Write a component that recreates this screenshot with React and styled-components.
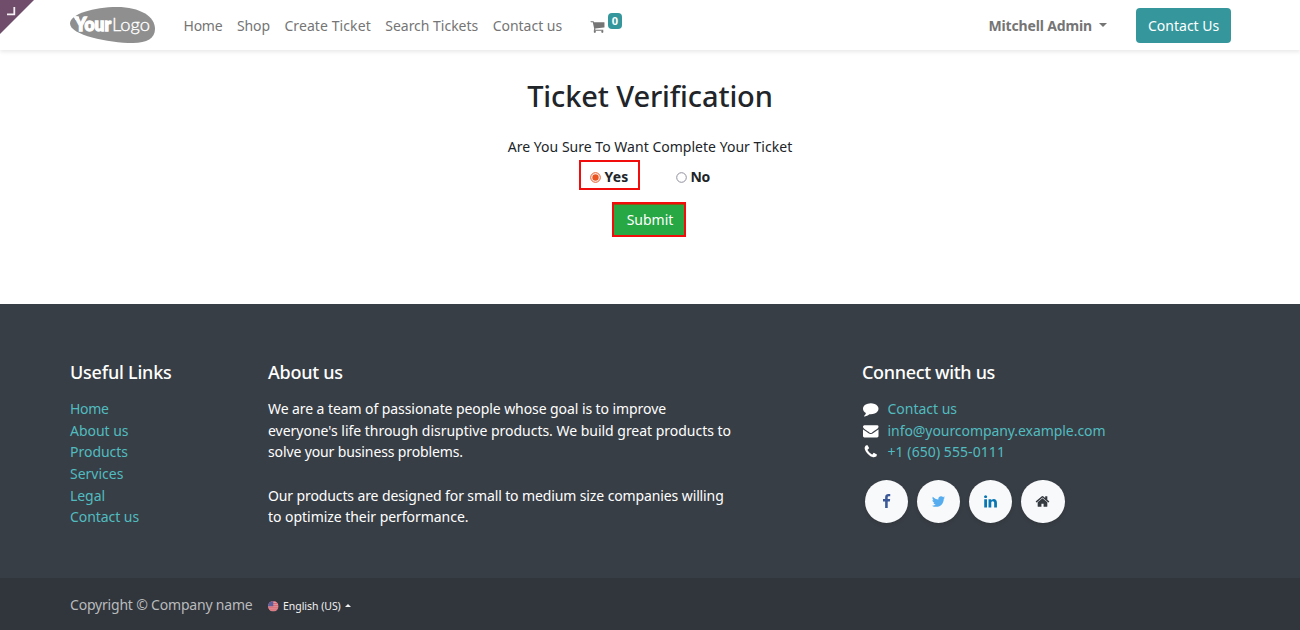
import React from "react";
import styled, { createGlobalStyle } from "styled-components";

const GlobalStyle = createGlobalStyle`
  *, *::before, *::after { box-sizing: border-box; }
  body {
    margin: 0;
    font: 400 14px/21.66px "Noto Sans", sans-serif;
    color: #212529;
    background: #fff;
  }
  a { color: inherit; text-decoration: none; }
`;

const Page = styled.div`
  position: relative;
  width: 1300px;
  height: 630px;
  display: flex;
  flex-direction: column;
  overflow: hidden;
`;

const Text = styled.span`
  display: block;
  white-space: pre;
  letter-spacing: ${(p) => p.$ls || 0}px;
  ${(p) => p.$w && `width: ${p.$w}px;`}
`;

const Corner = styled.svg`
  position: absolute;
  left: 0;
  top: 0;
  z-index: 2;
`;

const Header = styled.header`
  flex: none;
  display: flex;
  align-items: center;
  height: 50px;
  padding: 2px 69px 0 70px;
  color: #757575;
  background: #fff;
  box-shadow: 0 2px 4px rgba(0, 0, 0, 0.09);
`;

const Logo = styled.svg`
  flex: none;
  margin: -2px 28.6px 0 0;
`;

const Nav = styled.nav`
  display: flex;
  gap: 14.4px;
`;

const Cart = styled.a`
  display: flex;
  margin-left: 28px;
  gap: 2.5px;
`;

const Badge = styled.span`
  width: 14.5px;
  height: 16px;
  margin-top: -5px;
  border-radius: 4px;
  background: #35979c;
  color: #fff;
  font-size: 11px;
  font-weight: 700;
  line-height: 16px;
  text-align: center;
`;

const User = styled.a`
  display: flex;
  align-items: center;
  gap: 7px;
  margin-left: auto;
  font-weight: 700;
`;

const Caret = styled.i`
  width: 0;
  height: 0;
  border: ${(p) => p.$size}px solid transparent;
  ${(p) => (p.$up ? "border-bottom-color: currentColor; border-top: 0;" : "border-top-color: currentColor; border-bottom: 0;")}
  margin-top: ${(p) => (p.$up ? -3 : -2)}px;
`;

const ContactButton = styled.a`
  width: 95px;
  height: 34.5px;
  margin: -1px 0 0 29px;
  padding-left: 12px;
  border-radius: 4px;
  background: #35979c;
  color: #fff;
  line-height: 35.5px;
`;

const Main = styled.main`
  flex: none;
  display: flex;
  flex-direction: column;
  align-items: center;
  height: 254px;
  padding-top: 29px;
`;

const Title = styled.h1`
  margin: 0;
  font-size: 29px;
  font-weight: 500;
  line-height: 34px;
  letter-spacing: -0.11px;
`;

const Question = styled.p`
  margin: 23px 0 2px;
  line-height: 22px;
  letter-spacing: 0.02px;
`;

const Choices = styled.div`
  display: flex;
  align-items: center;
  width: 143px;
  gap: 26px;
`;

const Choice = styled.label`
  display: flex;
  align-items: center;
  gap: 4px;
  height: 30px;
  padding: 4px 0 0 ${(p) => (p.$marked ? 9 : 10)}px;
  ${(p) => p.$marked && "width: 61px; border: 2px solid #f20d0d;"}
  font-weight: 700;
`;

const Submit = styled.button`
  width: 74px;
  height: 35px;
  margin: 12px 0 0 -2px;
  padding: 0 0 0 2px;
  border: 2px solid #f20d0d;
  background: #28a745;
  box-shadow: inset 0 1px 0 #8a5a14;
  color: #fff;
  font: inherit;
  line-height: 30px;
`;

const Footer = styled.footer`
  flex: none;
  display: grid;
  grid-template-columns: 198px 594px 1fr;
  height: 274px;
  padding: 57px 69px 0 70px;
  background: #383e45;
  color: #fff;
`;

const Heading = styled.h5`
  margin: 0 0 15px;
  font-size: 18px;
  font-weight: 500;
  line-height: 22px;
  letter-spacing: ${(p) => p.$ls}px;
`;

const Link = styled.a`
  display: block;
  color: #51bcc0;
  white-space: pre;
  letter-spacing: ${(p) => p.$ls || 0}px;
`;

const Paragraph = styled.div`
  margin-bottom: 21.66px;
`;

const ContactRow = styled.div`
  display: flex;
  align-items: center;
  gap: 9px;
  padding-left: 1px;
`;

const Socials = styled.div`
  display: flex;
  gap: 8.8px;
  margin: 17px 0 0 3px;
`;

const Social = styled.a`
  display: grid;
  place-items: center;
  width: 43.3px;
  height: 43.3px;
  border-radius: 50%;
  background: #f8f9fb;
  color: ${(p) => p.$color};
  box-shadow: 0 2px 4px rgba(0, 0, 0, 0.1);
`;

const Bottom = styled.div`
  flex: 1;
  display: flex;
  align-items: center;
  padding: 2px 70px 0;
  background: #31353c;
  color: #b9bbbd;
`;

const Language = styled.div`
  display: flex;
  align-items: center;
  gap: 4.5px;
  margin: 3px 0 0 15.5px;
  color: #f2f2f2;
  font-size: 10.5px;
`;

const paths = {
  cart: "M704 1536q0 52-38 90t-90 38-90-38-38-90 38-90 90-38 90 38 38 90zm896 0q0 52-38 90t-90 38-90-38-38-90 38-90 90-38 90 38 38 90zm128-1088v512q0 24-16.500 42.500t-40.500 21.500l-1044 122q13 60 13 70 0 16-24 64h920q26 0 45 19t19 45-19 45-45 19h-1024q-26 0-45-19t-19-45q0-11 8-31.500t16-36 21.500-40 15.500-29.500l-177-823h-204q-26 0-45-19t-19-45 19-45 45-19h256q16 0 28.500 6.500t19.500 15.500 13 24.500 8 26 5.500 29.500 4.500 26h1201q26 0 45 19t19 45z",
  comment: "M1792 896q0 174-120 321.500t-326 233-450 85.500q-70 0-145-8-198 175-460 242-49 14-114 22-17 2-30.500-9t-17.500-29v-1q-3-4-.5-12t2-10 4.500-9.500l6-9 7-8.500 8-9q7-8 31-34.500t34.500-38 31-39.500 32.500-51 27-59 26-76q-157-89-247.500-220t-90.500-281q0-130 71-248.500t191-204.500 286-136.500 348-50.500q244 0 450 85.500t326 233 120 321.500z",
  envelope: "M1792 710v794q0 66-47 113t-113 47h-1472q-66 0-113-47t-47-113v-794q44 49 101 87 362 246 497 345 57 42 92.500 65.500t94.500 48 110 24.500h2q51 0 110-24.500t94.500-48 92.500-65.500q170-123 498-345 57-39 100-87zm0-294q0 79-49 151t-122 123q-376 261-468 325-10 7-42.500 31t-54 38.500-52 32.500-57.500 27-50 9h-2q-23 0-50-9t-57.500-27-52-32.500-54-38.500-42.500-31q-91-64-262-182.500t-205-142.500q-62-42-117-115.500t-55-136.500q0-78 41.500-130t118.500-52h1472q65 0 112.500 47t47.500 113z",
  phone: "M1600 1240q0 27-10 70.500t-21 68.500q-21 50-122 106-94 51-186 51-27 0-53-3.500t-57.500-12.500-47-14.500-55.500-20.500-49-18q-98-35-175-83-127-79-264-216t-216-264q-48-77-83-175-3-9-18-49t-20.500-55.500-14.500-47-12.500-57.500-3.500-53q0-92 51-186 56-101 106-122 25-11 68.500-21t70.500-10q14 0 21 3 18 6 53 76 11 19 30 54t35 63.500 31 53.500q3 4 17.500 25t21.500 35.500 7 28.500q0 20-28.500 50t-62 55-62 53-28.500 46q0 9 5 22.500t8.500 20.500 14 24 11.500 19q76 137 174 235t235 174q2 1 19 11.500t24 14 20.500 8.500 22.500 5q18 0 46-28.500t53-62 55-62 50-28.500q14 0 28.500 7t35.500 21.500 25 17.500q25 15 53.500 31t63.500 35 54 30q70 35 76 53 3 7 3 21z",
  facebook: "M1343 12v264h-157q-86 0-116 36t-30 108v189h293l-39 296h-254v759h-306v-759h-255v-296h255v-218q0-186 104-288.500t277-102.500q147 0 228 12z",
  twitter: "M1684 408q-67 98-162 167 1 14 1 42 0 130-38 259.500t-115.500 248.500-184.500 210.500-258 146-323 54.500q-271 0-496-145 35 4 78 4 225 0 401-138-105-2-188-64.500t-114-159.500q33 5 61 5 43 0 85-11-112-23-185.500-111.500t-73.500-205.500v-4q68 38 146 41-66-44-105-115t-39-154q0-88 44-163 121 149 294.500 238.500t371.500 99.500q-8-38-8-74 0-134 94.500-228.500t228.500-94.500q140 0 236 102 109-21 205-78-37 115-142 178 93-10 186-50z",
  linkedin: "M477 625v991h-330v-991h330zm21-306q1 73-50.500 122t-135.500 49h-2q-82 0-132-49t-50-122q0-74 51.500-122.500t134.500-48.500 133 48.500 51 122.500zm1166 729v568h-329v-530q0-105-40.500-164.500t-126.500-59.500q-63 0-105.500 34.500t-63.500 85.500q-11 30-11 81v553h-329q2-399 2-647t-1-296l-1-48h329v144h-2q20-32 41-56t56.500-52 87-43.500 114.500-15.500q171 0 275 113.500t104 332.500z",
  home: "M1472 992v480q0 26-19 45t-45 19h-384v-384h-256v384h-384q-26 0-45-19t-19-45v-480q0-1 .5-3t.5-3l575-474 575 474q1 2 1 6zm223-69l-62 74q-8 9-21 11h-3q-13 0-21-7l-692-577-692 577q-12 8-24 7-13-2-21-11l-62-74q-8-10-7-23.500t11-21.500l719-599q32-26 76-26t76 26l244 204v-195q0-14 9-23t23-9h192q14 0 23 9t9 23v408l219 182q10 8 11 21.500t-7 23.500z",
};

const Glyph = styled.svg`
  flex: none;
  fill: currentColor;
  width: ${(p) => p.$size}px;
  height: ${(p) => p.$size}px;
  margin-top: ${(p) => p.$top || 0}px;
`;

const Icon = ({ name, size, top }) => (
  <Glyph viewBox="0 0 1792 1792" $size={size} $top={top}>
    <path d={paths[name]} />
  </Glyph>
);

const Radio = ({ on }) => (
  <svg width="11" height="11" viewBox="0 0 11 11">
    <circle cx="5.500" cy="5.500" r="4.800" fill="#fff" stroke={on ? "#e95420" : "#8f8f9d"} strokeWidth="1" />
    {on && <circle cx="5.500" cy="5.500" r="3.200" fill="#e95420" />}
  </svg>
);

const Flag = () => (
  <svg width="10.500" height="10.500" viewBox="0 0 10 10">
    <clipPath id="flag"><circle cx="5" cy="5" r="5" /></clipPath>
    <g clipPath="url(#flag)">
      <rect width="10" height="10" fill="#e3a3aa" />
      {[0, 2, 4, 6, 8].map((y) => <rect key={y} y={y} width="10" height="1.100" fill="#d65f6b" />)}
      <rect width="5" height="5" fill="#5a5f9b" />
    </g>
  </svg>
);

const nav = [["Home", 39, -0.3], ["Shop", 33, -0.1], ["Create Ticket", 86.5, 0.09], ["Search Tickets", 93, -0.02], ["Contact us", 69.5, -0.02]];
const links = [["Home", -0.3], ["About us", -0.03], ["Products", -0.02], ["Services", 0], ["Legal", -0.06], ["Contact us", -0.06]];
const about = [
  [["We are a team of passionate people whose goal is to improve", -0.078], ["everyone's life through disruptive products. We build great products to", -0.019], ["solve your business problems.", -0.123]],
  [["Our products are designed for small to medium size companies willing", -0.115], ["to optimize their performance.", -0.04]],
];
const contacts = [["comment", "Contact us", -0.02], ["envelope", "info@yourcompany.example.com", -0.063], ["phone", "+1 (650) 555-0111", 0.071]];
const socials = [["facebook", "#3b5998"], ["twitter", "#55acee"], ["linkedin", "#0976b4"], ["home", "#343a40"]];

export default function App() {
  return (
    <Page>
      <GlobalStyle />
      <Corner width="34" height="34" viewBox="0 0 34 34">
        <path d="M0 0H34L0 34Z" fill="#6f4d6b" />
        <path d="M7 14.300H14.300V7" fill="none" stroke="#f4f0f4" strokeWidth="1.800" />
      </Corner>
      <Header>
        <Logo width="85" height="36" viewBox="0 0 85 36">
          <path d="M0 16.500C0 7 24 0 47 0C70 0 85 9.500 85 22C85 31 77 36 63 36C38 36 0 28 0 16.500Z" fill="#8f8f8f" />
          <path d="M3.500 9.500H9V13H5.500Z" fill="#fff" />
          <text x="5" y="23.500" textLength="36" lengthAdjust="spacingAndGlyphs" fill="#fff" stroke="#fff" strokeWidth="1.300" fontFamily="Lato, sans-serif" fontWeight="900" fontSize="18">Your</text>
          <text x="42" y="23.500" textLength="38" lengthAdjust="spacingAndGlyphs" fill="#fff" stroke="#fff" strokeWidth=".35" fontFamily="Lato, sans-serif" fontWeight="300" fontSize="18.500">Logo</text>
        </Logo>
        <Nav>
          {nav.map(([t, w, ls]) => <a key={t} href="#"><Text $w={w} $ls={ls}>{t}</Text></a>)}
        </Nav>
        <Cart href="#">
          <Icon name="cart" size={15} top={1} />
          <Badge>0</Badge>
        </Cart>
        <User href="#">
          <Text $w={103.5} $ls={-0.15}>Mitchell Admin</Text>
          <Caret $size={4} />
        </User>
        <ContactButton href="#">Contact Us</ContactButton>
      </Header>
      <Main>
        <Title>Ticket Verification</Title>
        <Question>Are You Sure To Want Complete Your Ticket</Question>
        <Choices>
          <Choice $marked><Radio on /><Text $ls={0.18}>Yes</Text></Choice>
          <Choice><Radio /><Text $ls={-0.3}>No</Text></Choice>
        </Choices>
        <Submit type="button">Submit</Submit>
      </Main>
      <Footer>
        <section>
          <Heading $ls={-0.22}>Useful Links</Heading>
          {links.map(([t, ls]) => <Link key={t} href="#" $ls={ls}>{t}</Link>)}
        </section>
        <section>
          <Heading $ls={-0.27}>About us</Heading>
          {about.map((lines, i) => (
            <Paragraph key={i}>
              {lines.map(([t, ls]) => <Text key={t} $ls={ls}>{t}</Text>)}
            </Paragraph>
          ))}
        </section>
        <section>
          <Heading $ls={-0.335}>Connect with us</Heading>
          {contacts.map(([icon, t, ls]) => (
            <ContactRow key={t}>
              <Icon name={icon} size={15.500} />
              <Link href="#" $ls={ls}>{t}</Link>
            </ContactRow>
          ))}
          <Socials>
            {socials.map(([icon, color]) => (
              <Social key={icon} href="#" $color={color}><Icon name={icon} size={15} /></Social>
            ))}
          </Socials>
        </section>
      </Footer>
      <Bottom>
        <Text $w={182.5} $ls={-0.197}>Copyright © Company name</Text>
        <Language>
          <Flag />
          <Text $ls={-0.04}>English (US)</Text>
          <Caret $size={3} $up />
        </Language>
      </Bottom>
    </Page>
  );
}
